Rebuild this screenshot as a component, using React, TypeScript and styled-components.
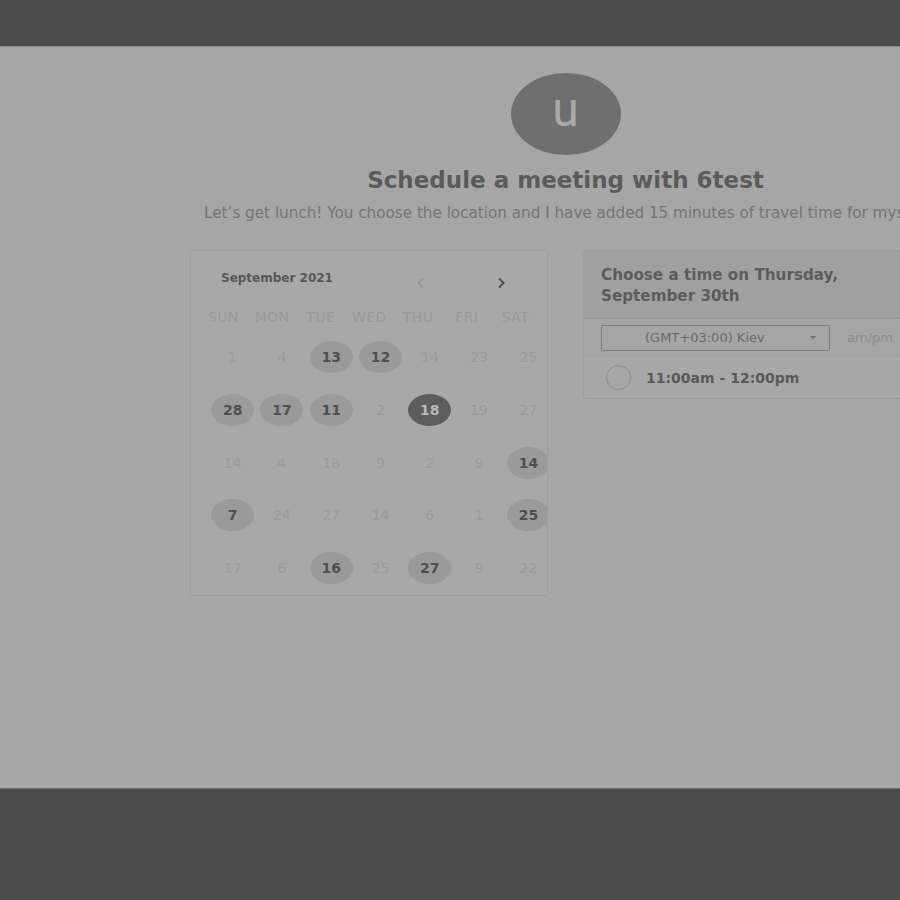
import React from "react";
import styled, { createGlobalStyle } from "styled-components";

const Global = createGlobalStyle`
  html, body { margin: 0; padding: 0; background: #4b4b4b; overflow: hidden; }
  * { box-sizing: border-box; }
`;

const Screen = styled.div`
  width: 900px;
  height: 900px;
  display: flex;
  flex-direction: column;
  overflow: hidden;
  font-family: "DejaVu Sans", "Liberation Sans", sans-serif;
`;

const TopBand = styled.div`
  height: 47px;
  flex: none;
  background: #4b4b4b;
  border-bottom: 1px solid #8a8a8a;
`;

const Page = styled.main`
  height: 742px;
  flex: none;
  background: #a6a6a6;
  overflow: hidden;
  border-bottom: 1px solid #6c6c6c;
`;

const BottomBand = styled.div`
  flex: 1;
  background: #4b4b4b;
`;

const Content = styled.div`
  width: 1131px;
  display: flex;
  flex-direction: column;
  align-items: center;
  padding-top: 26px;
`;

const Avatar = styled.div`
  width: 110px;
  height: 82px;
  border-radius: 50%;
  background: #6f6f6f;
  color: #a9a9a9;
  display: flex;
  align-items: center;
  justify-content: center;
  font-family: Roboto, "Liberation Sans", sans-serif;
  font-size: 48px;
  line-height: 1;
  padding-bottom: 8px;
`;

const Heading = styled.h1`
  margin: 11px 0 0;
  font-weight: 700;
  font-size: 23px;
  line-height: 28px;
  color: #5b5b5b;
`;

const Subtitle = styled.p`
  margin: 9px 0 0;
  font-size: 15.2px;
  line-height: 20px;
  color: #747474;
  white-space: nowrap;
`;

const Cards = styled.div`
  margin-top: 27px;
  display: flex;
  gap: 35px;
  align-items: flex-start;
`;

const CalendarCard = styled.section`
  width: 358px;
  height: 346px;
  background: #a8a8a8;
  border: 1px solid #9d9d9d;
  border-radius: 3px;
  overflow: hidden;
`;

const CalHeader = styled.div`
  display: flex;
  align-items: center;
  height: 54px;
  padding: 0 0 0 30px;
`;

const MonthLabel = styled.div`
  font-weight: 700;
  font-size: 12px;
  color: #575757;
  width: 192px;
  margin-top: -1px;
`;

const NavBtn = styled.div<{ $active?: boolean }>`
  width: 14px;
  height: 14px;
  display: flex;
  align-items: center;
  justify-content: center;
  color: ${(p) => (p.$active ? "#505050" : "#969696")};
  margin-top: 9px;
`;

const NavGap = styled.div`
  width: 67px;
`;

const WeekRow = styled.div`
  display: grid;
  grid-template-columns: repeat(7, 48.7px);
  padding-left: 8px;
  height: 23px;
  align-items: center;
`;

const WeekDay = styled.div`
  text-align: center;
  font-size: 14px;
  color: #999999;
  letter-spacing: 0.4px;
`;

const DateGrid = styled.div`
  display: grid;
  grid-template-columns: repeat(7, 49.3px);
  grid-auto-rows: 52.7px;
  padding-left: 17px;
  margin-top: 3px;
`;

const DateCell = styled.div`
  display: flex;
  align-items: center;
  justify-content: center;
`;

const DateMark = styled.div<{ $kind: "off" | "on" | "sel" }>`
  width: 43px;
  height: 32px;
  border-radius: 50%;
  display: flex;
  align-items: center;
  justify-content: center;
  font-size: 14px;
  font-weight: ${(p) => (p.$kind === "off" ? 400 : 700)};
  background: ${(p) =>
    p.$kind === "sel" ? "#5d5d5d" : p.$kind === "on" ? "#9a9a9a" : "transparent"};
  color: ${(p) =>
    p.$kind === "sel" ? "#b8b8b8" : p.$kind === "on" ? "#4f4f4f" : "#9a9a9a"};
`;

const TimeCard = styled.section`
  width: 358px;
  background: #a7a7a7;
  border: 1px solid #9d9d9d;
  border-radius: 3px;
  overflow: hidden;
`;

const TimeHeader = styled.div`
  background: #a0a0a0;
  border-bottom: 1px solid #9b9b9b;
  height: 68px;
  padding: 14px 17px 0;
  font-weight: 700;
  font-size: 15.2px;
  line-height: 21px;
  color: #5c5c5c;
`;

const ZoneRow = styled.div`
  display: flex;
  align-items: center;
  height: 38px;
  padding-left: 17px;
  background: #a5a5a5;
  border-bottom: 1px solid #a1a1a1;
`;

const ZoneSelect = styled.div`
  width: 229px;
  height: 26px;
  border: 1px solid #7c7c7c;
  border-radius: 2px;
  display: flex;
  align-items: center;
  padding-left: 43px;
  padding-right: 13px;
  font-size: 13px;
  color: #6a6a6a;
`;

const ZoneText = styled.span`
  flex: 1;
`;

const Caret = styled.span`
  width: 0;
  height: 0;
  border-left: 3.5px solid transparent;
  border-right: 3.5px solid transparent;
  border-top: 3.5px solid #6a6a6a;
`;

const AmPm = styled.span`
  margin-left: 17px;
  font-size: 13px;
  color: #8a8a8a;
`;

const SlotRow = styled.div`
  display: flex;
  align-items: center;
  height: 41px;
  padding-left: 22px;
`;

const Radio = styled.span`
  width: 25px;
  height: 25px;
  border-radius: 50%;
  border: 1.5px solid #8c8c8c;
  flex: none;
`;

const SlotText = styled.span`
  margin-left: 15px;
  font-weight: 700;
  font-size: 14px;
  color: #595959;
`;

type Kind = "off" | "on" | "sel";
const rows: [number, Kind][][] = [
  [[1, "off"], [4, "off"], [13, "on"], [12, "on"], [14, "off"], [23, "off"], [25, "off"]],
  [[28, "on"], [17, "on"], [11, "on"], [2, "off"], [18, "sel"], [19, "off"], [27, "off"]],
  [[14, "off"], [4, "off"], [18, "off"], [9, "off"], [2, "off"], [9, "off"], [14, "on"]],
  [[7, "on"], [24, "off"], [27, "off"], [14, "off"], [6, "off"], [1, "off"], [25, "on"]],
  [[17, "off"], [6, "off"], [16, "on"], [25, "off"], [27, "on"], [9, "off"], [22, "off"]],
];

const days = ["SUN", "MON", "TUE", "WED", "THU", "FRI", "SAT"];

const Chevron = ({ dir }: { dir: "left" | "right" }) => (
  <svg width="9" height="12" viewBox="0 0 9 12" fill="none">
    <path
      d={dir === "left" ? "M7 1.5 L2.5 6 L7 10.5" : "M2 1.5 L6.5 6 L2 10.5"}
      stroke="currentColor"
      strokeWidth="2"
    />
  </svg>
);

export default function App() {
  return (
    <>
      <Global />
      <Screen>
        <TopBand />
        <Page>
          <Content>
            <Avatar>u</Avatar>
            <Heading>Schedule a meeting with 6test</Heading>
            <Subtitle>
              Let’s get lunch! You choose the location and I have added 15 minutes of travel time for myself.
            </Subtitle>
            <Cards>
              <CalendarCard>
                <CalHeader>
                  <MonthLabel>September 2021</MonthLabel>
                  <NavBtn>
                    <Chevron dir="left" />
                  </NavBtn>
                  <NavGap />
                  <NavBtn $active>
                    <Chevron dir="right" />
                  </NavBtn>
                </CalHeader>
                <WeekRow>
                  {days.map((d) => (
                    <WeekDay key={d}>{d}</WeekDay>
                  ))}
                </WeekRow>
                <DateGrid>
                  {rows.flat().map(([n, k], i) => (
                    <DateCell key={i}>
                      <DateMark $kind={k}>{n}</DateMark>
                    </DateCell>
                  ))}
                </DateGrid>
              </CalendarCard>
              <TimeCard>
                <TimeHeader>
                  Choose a time on Thursday,
                  <br />
                  September 30th
                </TimeHeader>
                <ZoneRow>
                  <ZoneSelect>
                    <ZoneText>(GMT+03:00) Kiev</ZoneText>
                    <Caret />
                  </ZoneSelect>
                  <AmPm>am/pm</AmPm>
                </ZoneRow>
                <SlotRow>
                  <Radio />
                  <SlotText>11:00am - 12:00pm</SlotText>
                </SlotRow>
              </TimeCard>
            </Cards>
          </Content>
        </Page>
        <BottomBand />
      </Screen>
    </>
  );
}
